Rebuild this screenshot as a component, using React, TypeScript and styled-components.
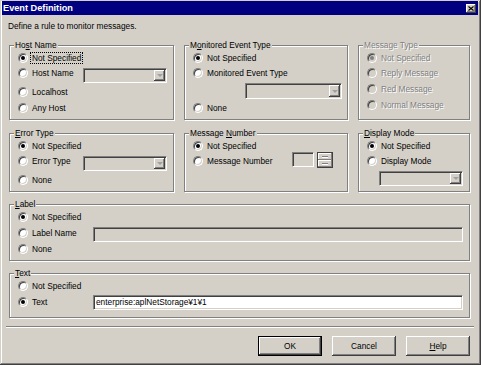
import React from "react";
import styled, { createGlobalStyle } from "styled-components";

const FACE = "#d4d0c8";

const Global = createGlobalStyle`
  html, body { margin: 0; padding: 0; background: ${FACE}; }
  body {
    font-family: "Liberation Sans", Arial, sans-serif;
    font-size: 8.3px;
    color: #000;
  }
  * { box-sizing: border-box; }
`;

const Window = styled.div`
  width: 481px;
  height: 365px;
  background: ${FACE};
  box-shadow: inset -1px -1px #404040, inset 1px 1px ${FACE},
    inset -2px -2px #808080, inset 2px 2px #fff;
  display: flex;
  flex-direction: column;
  overflow: hidden;
`;

const TitleBar = styled.div`
  margin: 1px 3px 0 2px;
  height: 14px;
  background: #000080;
  color: #fff;
  display: flex;
  align-items: center;
  justify-content: space-between;
  padding: 0 2px 0 1px;
`;

const Title = styled.span`
  font-weight: bold;
  font-size: 9.2px;
  line-height: 14px;
`;

const CloseBtn = styled.div`
  width: 10px;
  height: 9px;
  background: ${FACE};
  box-shadow: inset -1px -1px #404040, inset 1px 1px #fff, inset -2px -2px #808080;
  display: flex;
  align-items: center;
  justify-content: center;
`;

const Content = styled.div`
  display: flex;
  flex-direction: column;
  padding: 6px 11px 0 9px;
`;

const Description = styled.div`
  height: 11px;
  line-height: 11px;
  margin-left: -1px;
`;

const TopGrid = styled.div`
  margin-top: 8px;
  display: grid;
  grid-template-columns: 165px 164px 112px;
  grid-template-rows: 80px 64px;
  column-gap: 10px;
  row-gap: 8px;
`;

const Group = styled.fieldset<{ $h?: number; $mt?: number }>`
  margin: ${(p) => p.$mt ?? 0}px 0 0 0;
  padding: 0 6px 0 8px;
  min-width: 0;
  height: ${(p) => (p.$h ? `${p.$h}px` : "100%")};
  border: 1px solid #808080;
  box-shadow: inset 1px 1px #fff, 1px 1px #fff;
`;

const Legend = styled.legend<{ $disabled?: boolean }>`
  padding: 0 1px;
  margin-left: -4px;
  height: 10px;
  line-height: 10px;
  background: ${FACE};
  color: ${(p) => (p.$disabled ? "#808080" : "#000")};
  text-shadow: ${(p) => (p.$disabled ? "1px 1px #fff" : "none")};
`;

const Key = styled.span`
  text-decoration: underline;
`;

const Row = styled.div<{ $h: number }>`
  display: flex;
  align-items: flex-start;
  height: ${(p) => p.$h}px;
`;

const Choice = styled.div<{ $w?: number; $disabled?: boolean }>`
  display: flex;
  align-items: center;
  gap: 4px;
  height: 15px;
  white-space: nowrap;
  flex-shrink: 0;
  ${(p) => (p.$w ? `width: ${p.$w}px;` : "")}
  color: ${(p) => (p.$disabled ? "#808080" : "#000")};
  text-shadow: ${(p) => (p.$disabled ? "1px 1px #fff" : "none")};
`;

const Radio = styled.span<{ $checked?: boolean; $disabled?: boolean }>`
  width: 10px;
  height: 10px;
  border-radius: 50%;
  flex-shrink: 0;
  border: 1px solid;
  border-color: #808080 #fff #fff #808080;
  background: ${(p) => (p.$disabled ? FACE : "#fff")};
  box-shadow: inset 1px 1px #404040, inset -1px -1px ${FACE};
  display: flex;
  align-items: center;
  justify-content: center;
  &::after {
    content: "";
    width: 4px;
    height: 4px;
    border-radius: 50%;
    background: ${(p) =>
      p.$checked ? (p.$disabled ? "#808080" : "#000") : "transparent"};
  }
`;

const Focus = styled.span`
  border: 1px dotted #000;
  padding: 0 1px;
  margin-left: -2px;
  line-height: 10px;
`;

const Combo = styled.div<{ $w: number; $h: number; $mt?: number; $ml?: number }>`
  width: ${(p) => p.$w}px;
  height: ${(p) => p.$h}px;
  margin-top: ${(p) => p.$mt ?? 0}px;
  margin-left: ${(p) => p.$ml ?? 0}px;
  flex-shrink: 0;
  border: 1px solid;
  border-color: #808080 #fff #fff #808080;
  box-shadow: inset 1px 1px #404040, inset -1px -1px ${FACE};
  background: ${FACE};
  padding: 1px;
  display: flex;
  justify-content: flex-end;
`;

const ArrowBtn = styled.span`
  width: 11px;
  height: 100%;
  background: ${FACE};
  box-shadow: inset -1px -1px #404040, inset 1px 1px #fff, inset -2px -2px #808080;
  display: flex;
  align-items: center;
  justify-content: center;
  &::after {
    content: "";
    border-left: 3px solid transparent;
    border-right: 3px solid transparent;
    border-top: 3px solid #a0a0a0;
  }
`;

const Edit = styled.div<{ $white?: boolean; $mt?: number }>`
  flex: 1;
  min-width: 0;
  height: 15px;
  margin-top: ${(p) => p.$mt ?? 0}px;
  border: 1px solid;
  border-color: #808080 #fff #fff #808080;
  box-shadow: inset 1px 1px #404040, inset -1px -1px ${FACE};
  background: ${(p) => (p.$white ? "#fff" : FACE)};
  padding: 0 2px;
  line-height: 13px;
  white-space: nowrap;
  overflow: hidden;
`;

const SpinEdit = styled.div`
  width: 22px;
  height: 15px;
  margin-top: -1px;
  flex-shrink: 0;
  border: 1px solid;
  border-color: #808080 #fff #fff #808080;
  box-shadow: inset 1px 1px #404040, inset -1px -1px ${FACE};
  background: ${FACE};
`;

const Spin = styled.div`
  margin: -1px 0 0 3px;
  width: 16px;
  height: 16px;
  border: 1px solid #404040;
  display: flex;
  flex-direction: column;
  flex-shrink: 0;
`;

const SpinBtn = styled.span`
  flex: 1;
  background: ${FACE};
  box-shadow: inset -1px -1px #808080, inset 1px 1px #fff;
  display: flex;
  align-items: center;
  justify-content: center;
  &::after {
    content: "";
    width: 6px;
    height: 1px;
    background: #808080;
    box-shadow: 0 1px #fff;
  }
`;

const Separator = styled.div`
  margin: 8px -4px 0 -3px;
  height: 2px;
  border-top: 1px solid #808080;
  border-bottom: 1px solid #fff;
`;

const ButtonRow = styled.div`
  margin-top: 8px;
  display: flex;
  justify-content: flex-end;
  gap: 10px;
`;

const Button = styled.button<{ $default?: boolean }>`
  width: 64px;
  height: 20px;
  padding: 0;
  font: inherit;
  font-size: 8.3px;
  color: #000;
  background: ${FACE};
  border: ${(p) => (p.$default ? "1px solid #000" : "none")};
  box-shadow: inset -1px -1px #404040, inset 1px 1px #fff,
    inset -2px -2px #808080, inset 2px 2px ${FACE};
`;

type OptProps = {
  label: React.ReactNode;
  checked?: boolean;
  disabled?: boolean;
  w?: number;
};

const Option = ({ label, checked, disabled, w }: OptProps) => (
  <Choice $w={w} $disabled={disabled}>
    <Radio $checked={checked} $disabled={disabled} />
    <span>{label}</span>
  </Choice>
);

export default function App() {
  return (
    <>
      <Global />
      <Window>
        <TitleBar>
          <Title>Event Definition</Title>
          <CloseBtn>
            <svg width="6" height="5" viewBox="0 0 6 5">
              <path d="M0.5 0.5 L5.5 4.5 M5.5 0.5 L0.5 4.5" stroke="#000" strokeWidth="1.1" />
            </svg>
          </CloseBtn>
        </TitleBar>
        <Content>
          <Description>Define a rule to monitor messages.</Description>
          <TopGrid>
            <Group>
              <Legend>
                Ho<Key>s</Key>t Name
              </Legend>
              <Row $h={15}>
                <Option checked label={<Focus>Not Specified</Focus>} />
              </Row>
              <Row $h={19}>
                <Option w={65} label="Host Name" />
                <Combo $w={84} $h={15} $mt={3}>
                  <ArrowBtn />
                </Combo>
              </Row>
              <Row $h={16}>
                <Option label="Localhost" />
              </Row>
              <Row $h={16}>
                <Option label="Any Host" />
              </Row>
            </Group>

            <Group>
              <Legend>
                M<Key>o</Key>nitored Event Type
              </Legend>
              <Row $h={15}>
                <Option checked label="Not Specified" />
              </Row>
              <Row $h={15}>
                <Option label="Monitored Event Type" />
              </Row>
              <Row $h={20}>
                <Combo $w={97} $h={16} $mt={3} $ml={52}>
                  <ArrowBtn />
                </Combo>
              </Row>
              <Row $h={16}>
                <Option label="None" />
              </Row>
            </Group>

            <Group>
              <Legend $disabled>Message Type</Legend>
              <Row $h={15}>
                <Option checked disabled label="Not Specified" />
              </Row>
              <Row $h={16}>
                <Option disabled label="Reply Message" />
              </Row>
              <Row $h={16}>
                <Option disabled label="Red Message" />
              </Row>
              <Row $h={16}>
                <Option disabled label="Normal Message" />
              </Row>
            </Group>

            <Group>
              <Legend>
                <Key>E</Key>rror Type
              </Legend>
              <Row $h={15}>
                <Option checked label="Not Specified" />
              </Row>
              <Row $h={19}>
                <Option w={65} label="Error Type" />
                <Combo $w={84} $h={15} $mt={3}>
                  <ArrowBtn />
                </Combo>
              </Row>
              <Row $h={16}>
                <Option label="None" />
              </Row>
            </Group>

            <Group>
              <Legend>
                Message <Key>N</Key>umber
              </Legend>
              <Row $h={15}>
                <Option checked label="Not Specified" />
              </Row>
              <Row $h={16}>
                <Option w={99} label="Message Number" />
                <SpinEdit />
                <Spin>
                  <SpinBtn />
                  <SpinBtn />
                </Spin>
              </Row>
            </Group>

            <Group>
              <Legend>
                <Key>D</Key>isplay Mode
              </Legend>
              <Row $h={15}>
                <Option checked label="Not Specified" />
              </Row>
              <Row $h={16}>
                <Option label="Display Mode" />
              </Row>
              <Row $h={17}>
                <Combo $w={84} $h={15} $mt={2} $ml={12}>
                  <ArrowBtn />
                </Combo>
              </Row>
            </Group>
          </TopGrid>

          <Group $h={62} $mt={7}>
            <Legend>
              <Key>L</Key>abel
            </Legend>
            <Row $h={16}>
              <Option checked label="Not Specified" />
            </Row>
            <Row $h={16}>
              <Option w={75} label="Label Name" />
              <Edit $mt={2} />
            </Row>
            <Row $h={16}>
              <Option label="None" />
            </Row>
          </Group>

          <Group $h={50} $mt={7}>
            <Legend>
              <Key>T</Key>ext
            </Legend>
            <Row $h={16}>
              <Option label="Not Specified" />
            </Row>
            <Row $h={16}>
              <Option w={75} checked label="Text" />
              <Edit $white $mt={1}>enterprise:aplNetStorage¥1¥1</Edit>
            </Row>
          </Group>

          <Separator />

          <ButtonRow>
            <Button $default>OK</Button>
            <Button>Cancel</Button>
            <Button>
              <Key>H</Key>elp
            </Button>
          </ButtonRow>
        </Content>
      </Window>
    </>
  );
}
